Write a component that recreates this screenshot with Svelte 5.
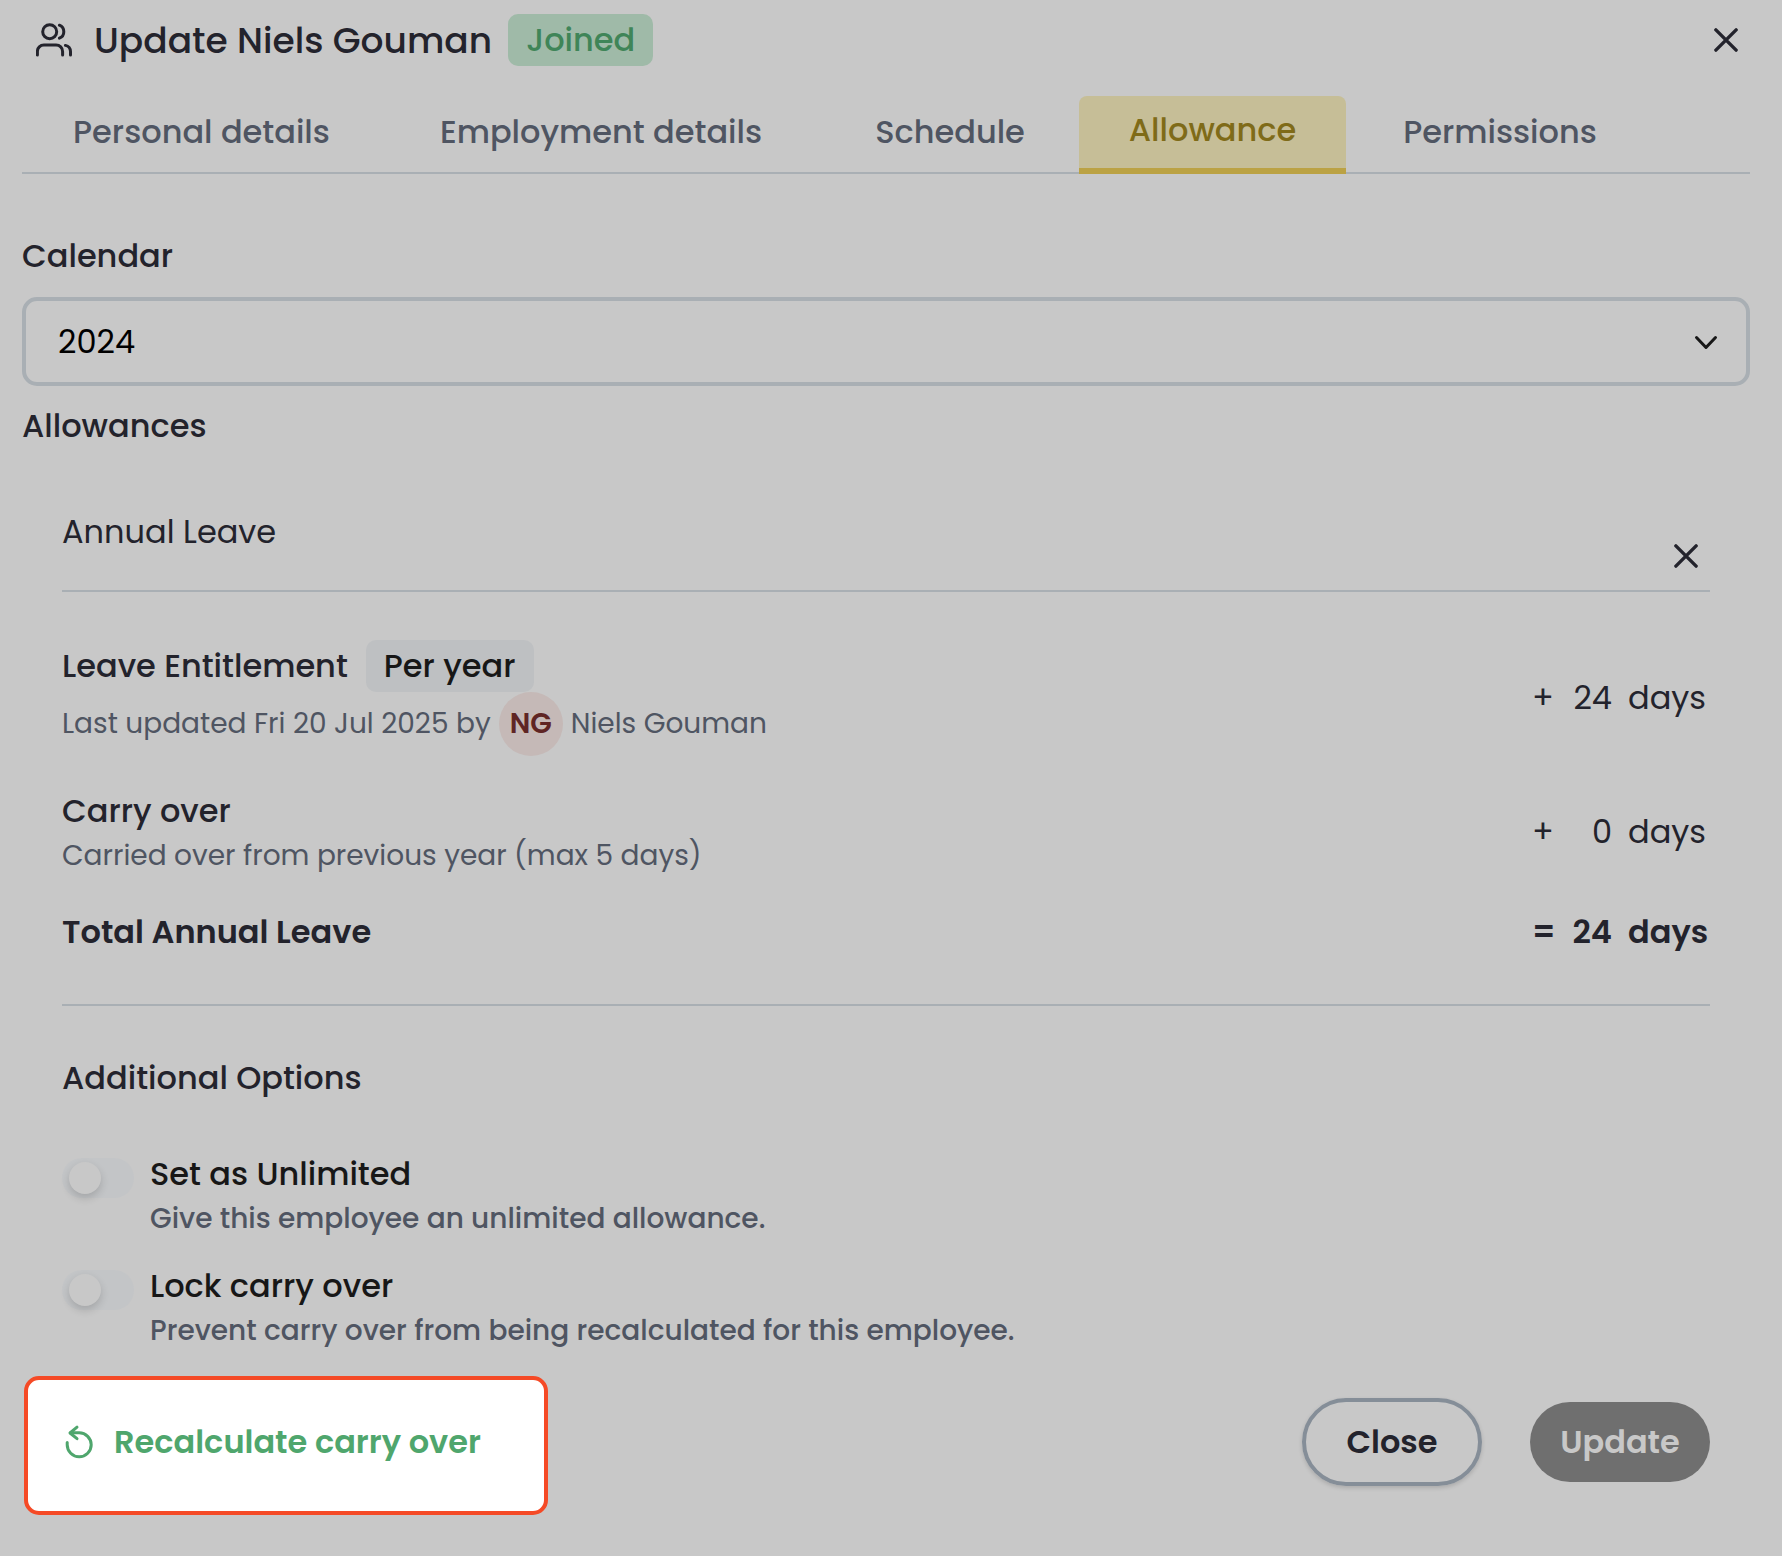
<script>
    // Tabs along the top of the dialog
    const tabs = ["Personal details", "Employment details", "Schedule", "Allowance", "Permissions"];
    let activeTab = $state("Allowance");

    const years = ["2023", "2024", "2025"];
    let year = $state("2024");

    let entitlement = $state(24);
    let carryOver = $state(0);
    let total = $derived(entitlement + carryOver);

    let options = $state([
        { id: "unlimited", label: "Set as Unlimited", hint: "Give this employee an unlimited allowance.", on: false },
        { id: "lock", label: "Lock carry over", hint: "Prevent carry over from being recalculated for this employee.", on: false }
    ]);
</script>

{#snippet cross()}
    <svg class="cross" viewBox="0 0 28 28" aria-hidden="true">
        <path d="M2.200 2.200 25.800 25.800M25.800 2.200 2.200 25.800" />
    </svg>
{/snippet}

{#snippet amount(sign, value)}
    <div class="amount">
        <span>{sign}</span>
        <span class="value">{value}</span>
        <span class="unit">days</span>
    </div>
{/snippet}

<main class="dialog">
    <header class="header">
        <svg class="people" viewBox="0 0 36 36" aria-hidden="true">
            <circle cx="13.700" cy="9.700" r="7" />
            <path d="M1.400 33v-3.500a6.500 6.500 0 0 1 6.500-6.500h12.200a6.500 6.500 0 0 1 6.500 6.500V33" />
            <path d="M23.400 3.200a7 7 0 0 1 0 13M29.400 23.400a6.500 6.500 0 0 1 5.100 6.100V33" />
        </svg>
        <h1>Update Niels Gouman</h1>
        <span class="badge joined">Joined</span>
        <button class="icon-button" type="button" aria-label="Close dialog">{@render cross()}</button>
    </header>

    <nav class="tabs">
        {#each tabs as tab}
            <button type="button" class="tab" class:active={tab === activeTab} onclick={() => (activeTab = tab)}>{tab}</button>
        {/each}
    </nav>

    <label class="field-label" for="calendar">Calendar</label>
    <div class="select">
        <select id="calendar" bind:value={year}>
            {#each years as y}
                <option value={y}>{y}</option>
            {/each}
        </select>
        <svg class="chevron" viewBox="0 0 24 24" aria-hidden="true"><path d="M2.500 8.500 12 18.500l9.500-10" /></svg>
    </div>

    <h2>Allowances</h2>

    <section class="allowance">
        <div class="allowance-head">
            <h3>Annual Leave</h3>
            <button class="icon-button" type="button" aria-label="Remove Annual Leave">{@render cross()}</button>
        </div>

        <div class="row entitlement">
            <div>
                <div class="row-title">
                    <span>Leave Entitlement</span>
                    <span class="badge period">Per year</span>
                </div>
                <div class="updated">
                    <span>Last updated Fri 20 Jul 2025 by</span>
                    <span class="avatar">NG</span>
                    <span>Niels Gouman</span>
                </div>
            </div>
            {@render amount("+", entitlement)}
        </div>

        <div class="row">
            <div>
                <div class="row-title">Carry over</div>
                <div class="updated">Carried over from previous year (max 5 days)</div>
            </div>
            {@render amount("+", carryOver)}
        </div>

        <div class="row total">
            <span>Total Annual Leave</span>
            {@render amount("=", total)}
        </div>

        <h3 class="options-title">Additional Options</h3>

        <div class="options">
            {#each options as option}
                <div class="option">
                    <input id={option.id} type="checkbox" role="switch" bind:checked={option.on} aria-describedby="{option.id}-hint" />
                    <div>
                        <label for={option.id}>{option.label}</label>
                        <p id="{option.id}-hint">{option.hint}</p>
                    </div>
                </div>
            {/each}
        </div>
    </section>

    <footer class="footer">
        <button class="recalculate" type="button">
            <svg viewBox="0 0 28 34" aria-hidden="true">
                <path d="M2.200 17.500v2.300a12 12 0 1 0 12-12H5.500" />
                <path d="M12 2.200 5 8l7 5.700" />
            </svg>
            Recalculate carry over
        </button>
        <div class="actions">
            <button class="close" type="button">Close</button>
            <button class="update" type="button" disabled>Update</button>
        </div>
    </footer>
</main>

<style>
    :global(body) {
        background: #c8c8c8;
    }

    .dialog {
        padding: 14px 32px 40px 22px;
        font-family: Poppins, Inter, "Liberation Sans", sans-serif;
        font-size: 32px;
        line-height: 48px;
        color: #23232c;
    }

    h1,
    h2,
    h3,
    p {
        margin: 0;
        font-size: inherit;
        font-weight: 500;
    }

    button,
    select {
        font: inherit;
        color: inherit;
        background: none;
        border: none;
        padding: 0;
        cursor: pointer;
    }

    svg {
        display: block;
        fill: none;
        stroke: currentColor;
        stroke-width: 3;
        stroke-linecap: round;
        stroke-linejoin: round;
    }

    .header {
        display: flex;
        align-items: center;
        height: 52px;
        padding-left: 14px;
    }

    .header h1 {
        margin: 0 16px 0 22px;
        padding-top: 2px;
        font-size: 36px;
    }

    .header .icon-button {
        margin-left: auto;
    }

    .people {
        width: 36px;
        height: 36px;
    }

    .badge {
        padding: 2px 18px;
        border-radius: 10px;
        font-weight: 500;
    }

    .joined {
        background: #9fbaa8;
        color: #3f8558;
    }

    .period {
        background: #bec0c2;
        color: #171717;
    }

    .icon-button {
        display: grid;
        place-items: center;
        width: 48px;
        height: 48px;
    }

    .cross {
        width: 24px;
        height: 24px;
        stroke-width: 4;
    }

    .tabs {
        display: grid;
        grid-template-columns: 359fr 440fr 258fr 267fr 308fr 96fr;
        height: 78px;
        margin-top: 30px;
        box-shadow: inset 0 -2px #a9afb4;
    }

    .tab {
        padding-bottom: 6px;
        font-weight: 500;
        color: #4f5562;
        white-space: nowrap;
    }

    .tab.active {
        padding-bottom: 4px;
        background: #c6be97;
        border-bottom: 6px solid #bba244;
        border-radius: 8px 8px 0 0;
        color: #7f6b18;
    }

    .field-label {
        display: block;
        margin: 58px 0 17px;
        font-weight: 500;
    }

    .select {
        position: relative;
    }

    .select select {
        appearance: none;
        display: block;
        box-sizing: border-box;
        width: 100%;
        height: 89px;
        padding: 0 80px 0 32px;
        border: 4px solid #a9afb4;
        border-radius: 15px;
        color: #000;
    }

    .chevron {
        position: absolute;
        right: 32px;
        top: 32px;
        width: 24px;
        height: 24px;
        color: #171717;
        pointer-events: none;
    }

    h2 {
        margin-top: 16px;
    }

    .allowance {
        margin-top: 58px;
        padding: 0 40px;
    }

    .allowance-head {
        display: flex;
        justify-content: space-between;
        height: 82px;
        border-bottom: 2px solid #a9afb4;
    }

    .allowance-head h3 {
        font-weight: 400;
    }

    .allowance-head .icon-button {
        align-self: flex-end;
        margin-bottom: 10px;
    }

    .row {
        display: flex;
        justify-content: space-between;
        align-items: center;
        margin-top: 31px;
    }

    .entitlement {
        margin-top: 48px;
    }

    .row-title {
        display: flex;
        align-items: center;
        gap: 18px;
        font-weight: 500;
    }

    .updated {
        display: flex;
        align-items: center;
        gap: 8px;
        font-size: 28px;
        line-height: 42px;
        color: #4f5562;
    }

    .avatar {
        width: 64px;
        border-radius: 50%;
        background: #c5b9b7;
        color: #5f2524;
        font-weight: 600;
        line-height: 64px;
        text-align: center;
    }

    .amount {
        display: grid;
        grid-template-columns: 24px 56px 98px;
    }

    .value {
        text-align: right;
    }

    .unit {
        padding-left: 16px;
    }

    .total {
        padding-bottom: 48px;
        border-bottom: 2px solid #a9afb4;
        font-weight: 600;
    }

    .options-title {
        margin: 48px 0;
    }

    .options {
        display: grid;
        gap: 22px;
    }

    .option {
        display: flex;
        gap: 16px;
    }

    .option input {
        appearance: none;
        flex: none;
        width: 72px;
        height: 40px;
        margin: 8px 0 0;
        padding: 4px 7px;
        box-sizing: border-box;
        border-radius: 20px;
        background: #c3c5c7;
    }

    .option input::before {
        content: "";
        display: block;
        width: 32px;
        height: 32px;
        border-radius: 50%;
        background: #c8c8c8;
        box-shadow: 0 4px 8px rgba(0, 0, 0, 0.16);
    }

    .option input:checked {
        background: #3f8558;
    }

    .option input:checked::before {
        margin-left: auto;
    }

    .option label {
        display: block;
        font-weight: 500;
        color: #171717;
    }

    .option p {
        font-size: 28px;
        line-height: 42px;
        color: #4f5562;
    }

    .footer {
        display: flex;
        justify-content: space-between;
        align-items: center;
        margin-top: 24px;
        padding: 0 40px 0 2px;
    }

    .recalculate {
        display: flex;
        align-items: center;
        gap: 21px;
        height: 139px;
        padding: 0 63px 8px 37px;
        box-sizing: border-box;
        border: 4px solid #f54a26;
        border-radius: 15px;
        background: #fff;
        color: #4fa66d;
        font-weight: 600;
    }

    .recalculate svg {
        width: 28px;
        height: 34px;
    }

    .actions {
        display: flex;
        align-items: center;
        gap: 48px;
        padding-bottom: 8px;
        font-weight: 600;
    }

    .close,
    .update {
        width: 180px;
        height: 80px;
        border-radius: 44px;
    }

    .close {
        height: 88px;
        border: 4px solid #858e98;
        box-shadow: 0 2px 4px rgba(0, 0, 0, 0.15);
    }

    .update {
        background: #6f6f6f;
        color: #c8c8c8;
    }
</style>
